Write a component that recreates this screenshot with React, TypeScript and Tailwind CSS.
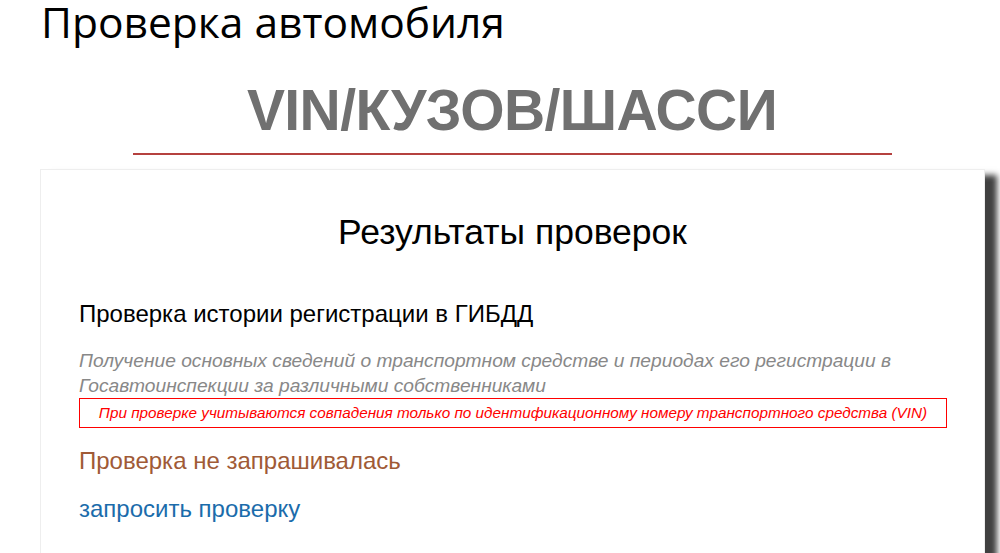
export default function App() {
  return (
    <div className="w-[1000px] h-[553px] overflow-hidden bg-white font-['Liberation_Sans',Arial,sans-serif]">
      <h1 className="pl-[41px] pb-[6px] text-[42.5px] leading-[44px] text-black font-['Open_Sans',sans-serif]">
        Проверка автомобиля
      </h1>
      <div className="mt-[30px] pl-[24px] text-center text-[57px] leading-[60px] font-bold tracking-[-0.6px] text-[#707070]">
        VIN/КУЗОВ/ШАССИ
      </div>
      <div className="ml-[133px] mt-[13px] w-[759px] h-[2px] bg-[#b5413f]" />
      <div className="ml-[40px] mr-[15px] mt-[14px] h-[400px] bg-white border border-[#eeeeee] shadow-[12px_6px_6px_rgba(0,0,0,0.75)]">
        <div className="pt-[42px] text-center text-[35.5px] leading-[40px] text-black">
          Результаты проверок
        </div>
        <div className="pl-[38px] pr-[37px]">
          <div className="mt-[48px] text-[24px] leading-[28px] text-black">
            Проверка истории регистрации в ГИБДД
          </div>
          <p className="mt-[20px] text-[19.2px] leading-[25px] italic text-[#888888]">
            Получение основных сведений о транспортном средстве и периодах его регистрации в Госавтоинспекции за различными собственниками
          </p>
          <div className="border border-[#ff0000] py-[5px] text-center text-[15.3px] leading-[18px] italic text-[#ff0000]">
            При проверке учитываются совпадения только по идентификационному номеру транспортного средства (VIN)
          </div>
          <div className="mt-[19px] text-[24px] leading-[28px] text-[#a05a36]">
            Проверка не запрашивалась
          </div>
          <a href="#" className="block mt-[20px] text-[24px] leading-[28px] text-[#1b6cab]">
            запросить проверку
          </a>
        </div>
      </div>
    </div>
  );
}
